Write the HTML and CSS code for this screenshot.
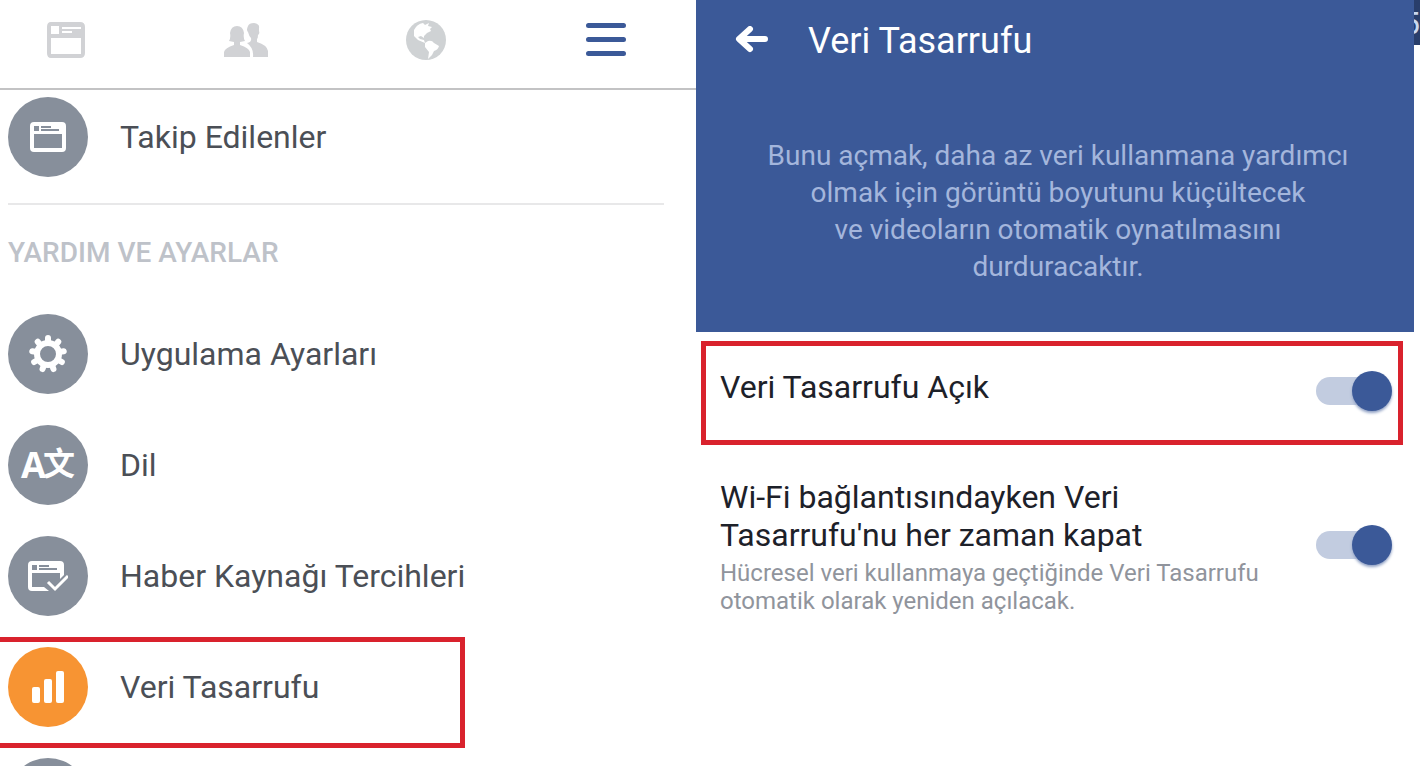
FILE: index.html
```html
<!DOCTYPE html>
<html lang="tr">
<head>
<meta charset="utf-8">
<title>Veri Tasarrufu</title>
<link rel="stylesheet" href="styles.css">
</head>
<body>
<div class="screens">
  <section class="menu">
    <nav class="tabs">
      <a class="tab" href="#feed" aria-label="Haber Kaynağı"><svg width="40" height="38" viewBox="0 0 40 38"><path fill="#d1d2d5" fill-rule="evenodd" d="M5 1H34Q39 1 39 6V32Q39 37 34 37H5Q1 37 1 32V6Q1 1 5 1ZM5 5V13H13V5ZM16 6V8H35V6ZM16 10V12H26V10ZM5 17V33H35V17Z"/></svg></a>
      <a class="tab" href="#friends" aria-label="Arkadaşlar"><svg width="44" height="36" viewBox="0 0 44 36"><path fill="#d1d2d5" d="M0 35V30Q1 26 10 23V20L5 19Q7 16 6 11Q7 4 13 4Q19 4 20 11Q19 16 21 19L16 20V23Q25 26 26 30V35ZM23 21Q28 20 27 16Q25 14 24 10Q22 8 24 4Q25 1 30 1Q36 2 35 6V9Q36 12 34 13Q34 16 33 17V20Q43 23 44 29V35H29Q30 26 23 21Z"/></svg></a>
      <a class="tab" href="#notifications" aria-label="Bildirimler"><svg width="40" height="40" viewBox="0 0 40 40"><circle cx="20" cy="20" r="20" fill="#cfd2d4"/><path fill="#fff" d="M8 10Q11 4 17 3L19 5L23 3L22 6L26 7L24 9L25 11L21 13L18 16V18L15 16L12 17L14 19L18 20L19 23L22 21Q26 20 28 23L33 26Q32 30 28 31L26 35L22 39L23 32L19 27V23L12 20L8 16Z"/></svg></a>
      <a class="tab" href="#menu" aria-label="Menü" aria-current="page"><svg width="40" height="36" viewBox="0 0 40 36"><path stroke="#3b5998" stroke-width="5" stroke-linecap="round" d="M2.500 3.500H37.500M2.500 17.500H37.500M2.500 31.500H37.500"/></svg></a>
    </nav>
    <ul class="list">
      <li><a class="item" href="#following"><span class="badge"><svg width="36" height="32" viewBox="0 0 36 32"><path fill="#fff" fill-rule="evenodd" d="M4 1H32Q36 1 36 5V27Q36 31 32 31H4Q0 31 0 27V5Q0 1 4 1ZM4 5V10H9V5ZM11 5V7H21V5ZM11 8V10H29V8ZM4 13V27H32V13Z"/></svg></span>Takip Edilenler</a></li>
    </ul>
    <h2 class="heading">YARDIM VE AYARLAR</h2>
    <ul class="list list-settings">
      <li><a class="item" href="#app"><span class="badge"><svg width="40" height="40" viewBox="-20 -20 40 40"><g stroke="#fff" stroke-width="6" stroke-linecap="round"><path id="t" d="M0-12V-16"/><use href="#t" transform="rotate(40)"/><use href="#t" transform="rotate(80)"/><use href="#t" transform="rotate(120)"/><use href="#t" transform="rotate(160)"/><use href="#t" transform="rotate(200)"/><use href="#t" transform="rotate(240)"/><use href="#t" transform="rotate(280)"/><use href="#t" transform="rotate(320)"/></g><circle r="11" fill="#878f9b" stroke="#fff" stroke-width="6"/></svg></span>Uygulama Ayarları</a></li>
      <li><a class="item" href="#language"><span class="badge language"><span class="latin">A</span><span class="han">文</span></span>Dil</a></li>
      <li><a class="item" href="#preferences"><span class="badge"><svg width="40" height="34" viewBox="0 0 40 34"><path fill="#fff" fill-rule="evenodd" d="M4 2H32Q36 2 36 6V16L32 20V14H4V28H16L21 32H4Q0 32 0 28V6Q0 2 4 2ZM4 6V11H9V6ZM11 6V8H21V6ZM11 9V11H29V9Z"/><path fill="none" stroke="#fff" stroke-width="3" d="M20 23L27 30L40 17"/></svg></span>Haber Kaynağı Tercihleri</a></li>
      <li class="marked"><a class="item" href="#data"><span class="badge orange"><svg width="34" height="32" viewBox="0 0 34 32" fill="#fff"><rect x="1" y="16" width="8" height="16" rx="2"/><rect x="13" y="8" width="8" height="24" rx="2"/><rect x="25" width="8" height="32" rx="2"/></svg></span>Veri Tasarrufu</a></li>
      <li><a class="item" href="#more" aria-label="Diğer"><span class="badge"></span></a></li>
    </ul>
  </section>
  <main class="saver">
    <header class="hero">
      <div class="bar">
        <button class="back" type="button" aria-label="Geri"><svg width="34" height="28" viewBox="0 0 34 28"><path fill="none" stroke="#fff" stroke-width="6" stroke-linecap="round" stroke-linejoin="round" d="M15 3L4 13L15 23M5 13H30"/></svg></button>
        <h1 class="title">Veri Tasarrufu</h1>
      </div>
      <p class="intro">Bunu açmak, daha az veri kullanmana yardımcı<br>olmak için görüntü boyutunu küçültecek<br>ve videoların otomatik oynatılmasını<br>durduracaktır.</p>
    </header>
    <div class="option option-marked">
      <label class="name" for="saver">Veri Tasarrufu Açık</label>
      <input class="switch" id="saver" type="checkbox" role="switch" checked>
    </div>
    <div class="option option-wifi">
      <div class="copy">
        <label class="name" for="wifi">Wi-Fi bağlantısındayken Veri<br>Tasarrufu'nu her zaman kapat</label>
        <p class="note">Hücresel veri kullanmaya geçtiğinde Veri Tasarrufu<br>otomatik olarak yeniden açılacak.</p>
      </div>
      <input class="switch" id="wifi" type="checkbox" role="switch" checked>
    </div>
  </main>
  <aside class="edge"><div class="edge-bar">5</div></aside>
</div>
</body>
</html>
```
FILE: styles.css
```css
* { box-sizing: border-box; }
html, body { height: 100%; }
body { margin: 0; background: #fff; font-family: Roboto, "Liberation Sans", sans-serif; }
svg { display: block; }
a { color: inherit; text-decoration: none; }
.screens { display: grid; grid-template-columns: 696fr 718fr 6px; height: 100%; overflow: hidden; }
.menu, .saver { min-width: 0; min-height: 0; }
.menu { overflow: hidden; }
.tabs { display: grid; grid-template-columns: repeat(4, 180px); height: 90px; padding-bottom: 8px; border-bottom: 2px solid #c3c3c4; overflow: hidden; }
.tab { display: flex; align-items: center; justify-content: center; width: 132px; }
.list { list-style: none; margin: 0; padding: 7px 0 0; }
.item { display: flex; align-items: center; gap: 32px; height: 80px; padding-left: 8px; font-size: 32px; line-height: 40px; color: #4b4f56; }
.badge { display: flex; align-items: center; justify-content: center; flex: none; width: 80px; height: 80px; border-radius: 50%; background: #878f9b; color: #fff; }
.orange { background: #f79433; }
.language { line-height: 40px; font-weight: 700; }
.latin { font-family: "Open Sans", sans-serif; font-size: 36px; }
.han { padding-bottom: 8px; margin-left: -3px; font-family: "Noto Sans CJK SC", sans-serif; font-size: 32px; }
.heading { margin: 26px 32px 0 8px; padding-top: 32px; border-top: 2px solid #e8e8e9; font-size: 28px; line-height: 32px; font-weight: 500; color: #bec2c9; }
.list-settings { display: flex; flex-direction: column; gap: 31px; padding-top: 45px; }
.marked { margin: -10px 0 -21px; width: 465px; height: 111px; padding-top: 5px; border: 5px solid #d9222d; border-left: 0; }
.hero { height: 332px; background: #3b5998; color: #fff; }
.bar { display: flex; align-items: center; gap: 39px; height: 80px; padding-left: 39px; }
.back { padding: 0; border: 0; background: none; }
.title { margin: 0; padding-top: 2px; font-size: 36px; line-height: 40px; font-weight: 400; }
.intro { margin: 57px 0 0; padding-left: 6px; font-size: 28px; line-height: 37px; text-align: center; color: #a4b6dc; }
.option { display: flex; align-items: center; justify-content: space-between; }
.option-marked { margin: 9px 11px 0 5px; height: 104px; padding: 0 6px 4px 14px; border: 5px solid #d9222d; }
.name { font-size: 32px; line-height: 38px; color: #1d2129; }
.option-marked .name { padding-bottom: 8px; }
.option-wifi { padding: 33px 22px 0 24px; align-items: flex-start; }
.option-wifi .switch { margin-top: 47px; }
.note { margin: 5px 0 0; font-size: 24px; line-height: 28px; color: #90949c; }
.switch { position: relative; appearance: none; flex: none; width: 76px; height: 40px; margin: 0; }
.switch::before { content: ""; position: absolute; left: 0; top: 6px; width: 60px; height: 28px; border-radius: 14px; background: #c2cce0; }
.switch::after { content: ""; position: absolute; right: 0; top: 0; width: 40px; height: 40px; border-radius: 50%; background: #3b5998; box-shadow: 0 2px 3px #8fa0c4; }
.edge-bar { display: flex; align-items: center; justify-content: flex-end; height: 45px; overflow: hidden; background: #293e6b; color: #c8d8f0; font-size: 32px; }
```
